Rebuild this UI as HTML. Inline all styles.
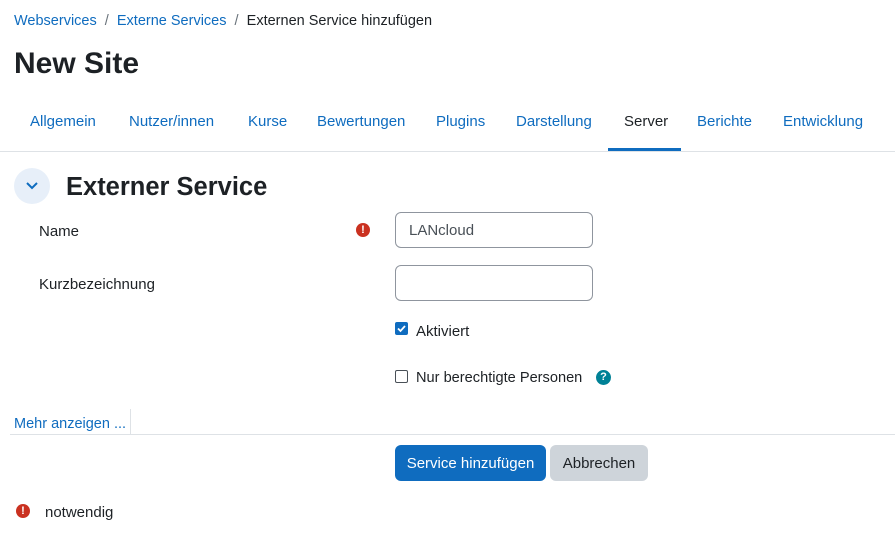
<!DOCTYPE html>
<html><head><meta charset="utf-8"><style>
body{margin:0;width:895px;height:538px;background:#fff;font-family:"Liberation Sans",sans-serif;color:#1d2125;font-size:15px;position:relative;overflow:hidden}
.a{position:absolute;white-space:nowrap}
.l{color:#0f6cbf}
.tab{position:absolute;top:113px;color:#0f6cbf;font-size:15px}
.inp{position:absolute;left:395px;width:198px;height:36px;border:1px solid #8f959e;border-radius:6px;box-sizing:border-box}
.err{position:absolute;width:14px;height:14px;border-radius:50%;background:#ca3120;color:#fff;font-size:11px;font-weight:bold;text-align:center;line-height:14px}
</style></head><body>
<div class="a" style="left:14px;top:13px;font-size:14.5px"><span class="l">Webservices</span><span style="color:#6a737b">&nbsp; / &nbsp;</span><span class="l">Externe Services</span><span style="color:#6a737b">&nbsp; / &nbsp;</span>Externen Service hinzufügen</div>
<div class="a" style="left:14px;top:47px;font-size:30px;font-weight:bold">New Site</div>
<div class="tab" style="left:30px">Allgemein</div>
<div class="tab" style="left:129px">Nutzer/innen</div>
<div class="tab" style="left:248px">Kurse</div>
<div class="tab" style="left:317px">Bewertungen</div>
<div class="tab" style="left:436px">Plugins</div>
<div class="tab" style="left:516px">Darstellung</div>
<div class="tab" style="left:624px;color:#1d2125">Server</div>
<div class="tab" style="left:697px">Berichte</div>
<div class="tab" style="left:783px">Entwicklung</div>
<div class="a" style="left:0;top:151px;width:895px;height:1px;background:#dee2e6"></div>
<div class="a" style="left:608px;top:148px;width:73px;height:3px;background:#0f6cbf"></div>
<div class="a" style="left:14px;top:168px;width:36px;height:36px;border-radius:50%;background:#e7eff9"></div>
<svg class="a" style="left:24px;top:180px" width="16" height="12" viewBox="0 0 16 12"><path d="M3 3 L8 8 L13 3" fill="none" stroke="#0f6cbf" stroke-width="2"/></svg>
<div class="a" style="left:66px;top:173px;font-size:25.5px;font-weight:bold">Externer Service</div>
<div class="a" style="left:39px;top:223px">Name</div>
<div class="err" style="left:356px;top:223px">!</div>
<div class="inp" style="top:212px"><span class="a" style="left:13px;top:9px;color:#495057">LANcloud</span></div>
<div class="a" style="left:39px;top:276px">Kurzbezeichnung</div>
<div class="inp" style="top:265px"></div>
<div class="a" style="left:395px;top:322px;width:13px;height:13px;background:#0f6cbf;border-radius:2px"></div>
<svg class="a" style="left:395px;top:322px" width="13" height="13"><path d="M3 6.5 L5.5 9 L10 4" fill="none" stroke="#fff" stroke-width="1.8"/></svg>
<div class="a" style="left:416px;top:323px">Aktiviert</div>
<div class="a" style="left:395px;top:370px;width:13px;height:13px;border:1px solid #495057;border-radius:2px;box-sizing:border-box"></div>
<div class="a" style="left:416px;top:370px;font-size:14.6px">Nur berechtigte Personen</div>
<div class="a" style="left:596px;top:370px;width:15px;height:15px;border-radius:50%;background:#008196;color:#fff;font-size:11px;font-weight:bold;text-align:center;line-height:15px">?</div>
<div class="a" style="left:14px;top:416px;color:#0f6cbf;font-size:14.5px">Mehr anzeigen ...</div>
<div class="a" style="left:130px;top:409px;width:1px;height:26px;background:#dee2e6"></div>
<div class="a" style="left:10px;top:434px;width:885px;height:1px;background:#dee2e6"></div>
<div class="a" style="left:395px;top:445px;width:151px;height:36px;background:#0f6cbf;border-radius:6px;color:#fff;text-align:center;line-height:38px">Service hinzufügen</div>
<div class="a" style="left:550px;top:445px;width:98px;height:36px;background:#ced4da;border-radius:6px;text-align:center;line-height:38px">Abbrechen</div>
<div class="err" style="left:16px;top:504px">!</div>
<div class="a" style="left:45px;top:504px">notwendig</div>
</body></html>
